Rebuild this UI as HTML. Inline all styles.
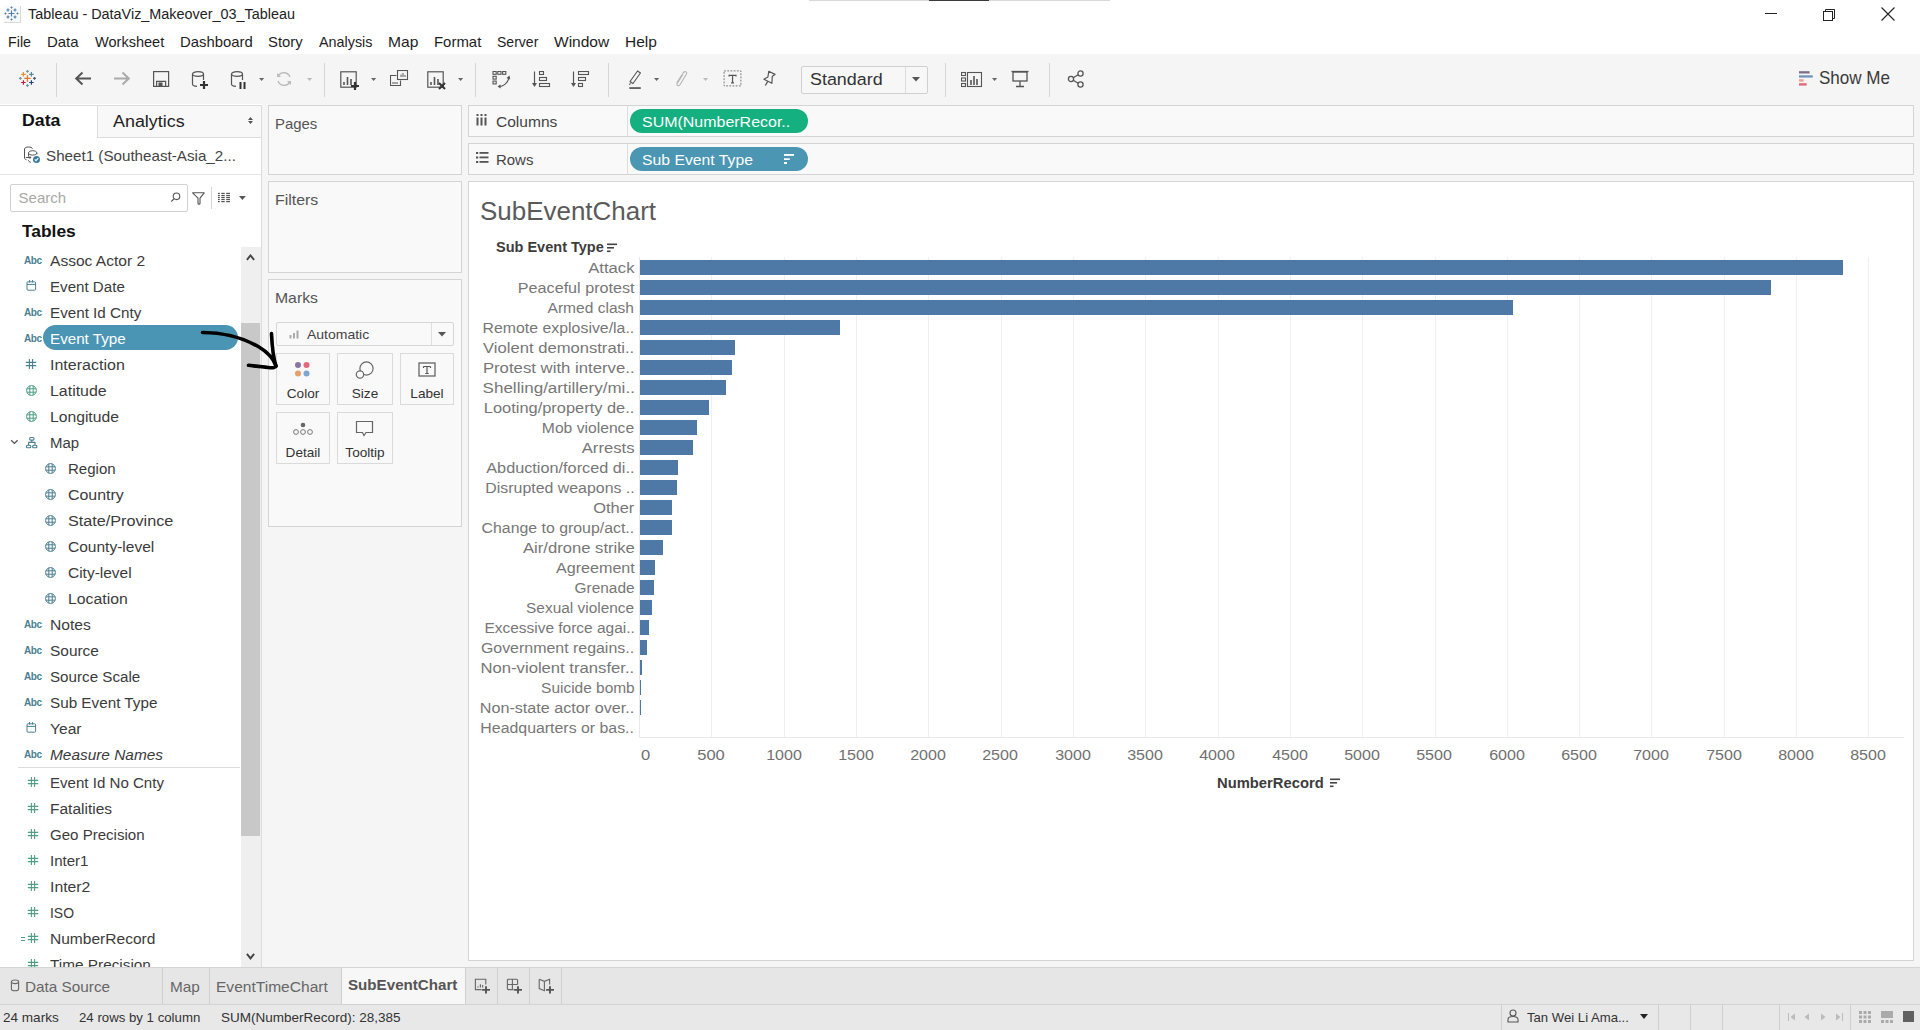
<!DOCTYPE html>
<html><head><meta charset="utf-8"><title>Tableau - DataViz_Makeover_03_Tableau</title>
<style>
html,body{margin:0;padding:0;width:1920px;height:1030px;overflow:hidden;background:#fff;}
body{position:relative;font-family:"Liberation Sans",sans-serif;}
.a{position:absolute;display:block;}
.t{white-space:nowrap;}
</style></head><body>
<div class="a" style="left:0px;top:0px;width:1920px;height:54px;background:#ffffff;"></div>
<div class="a" style="left:0px;top:54px;width:1920px;height:50px;background:#f5f5f5;"></div>
<div class="a" style="left:809px;top:0px;width:301px;height:1px;background:#d9d9d9;"></div>
<div class="a" style="left:929px;top:0px;width:60px;height:1px;background:#3a3a3a;"></div>
<svg class="a" style="left:3px;top:5px;" width="19" height="19" viewBox="0 0 19 19"><rect x="1" y="1" width="17" height="17" fill="#d8d8d8"/><rect x="0.5" y="0.5" width="16.5" height="16.5" fill="#f7f9fb"/><g stroke="#4f7fa8" stroke-width="1.2"><path d="M8.5 5.5v6M5.5 8.5h6"/><path d="M5 3.5v3M3.5 5h3M12 3.5v3M10.5 5h3M5 10.5v3M3.5 12h3M12 10.5v3M10.5 12h3"/><path d="M8.5 1.5v2M7.5 2.5h2M8.5 13.5v2M7.5 14.5h2M1.5 8.5h2M2.5 7.5v2M13.5 8.5h2M14.5 7.5v2" stroke-width="1"/></g></svg>
<div class="a t" id="f0" style="top:7.19px;font-size:14.9px;line-height:14.9px;color:#222;left:27.8px;transform-origin:0 50%;transform:scaleX(0.9666);">Tableau - DataViz_Makeover_03_Tableau</div>
<div class="a" style="left:1765px;top:13px;width:12px;height:1px;background:#222;"></div>
<svg class="a" style="left:1820px;top:6px;" width="18" height="18" viewBox="0 0 18 18"><g fill="none" stroke="#222" stroke-width="1"><rect x="3.5" y="5.5" width="9" height="9"/><path d="M5.5 5.5V3.5h9v9h-2"/></g></svg>
<svg class="a" style="left:1879px;top:5px;" width="18" height="18" viewBox="0 0 18 18"><path d="M2.5 2.5l13 13M15.5 2.5l-13 13" stroke="#222" stroke-width="1.1"/></svg>
<div class="a t" id="f1" style="top:35.14px;font-size:14.6px;line-height:14.6px;color:#1e1e1e;left:7.7px;transform-origin:0 50%;transform:scaleX(0.9781);">File</div>
<div class="a t" id="f2" style="top:35.14px;font-size:14.6px;line-height:14.6px;color:#1e1e1e;left:47.0px;transform-origin:0 50%;transform:scaleX(1.0250);">Data</div>
<div class="a t" id="f3" style="top:35.14px;font-size:14.6px;line-height:14.6px;color:#1e1e1e;left:94.8px;transform-origin:0 50%;transform:scaleX(0.9959);">Worksheet</div>
<div class="a t" id="f4" style="top:35.14px;font-size:14.6px;line-height:14.6px;color:#1e1e1e;left:179.79999999999998px;transform-origin:0 50%;transform:scaleX(1.0181);">Dashboard</div>
<div class="a t" id="f5" style="top:35.14px;font-size:14.6px;line-height:14.6px;color:#1e1e1e;left:268.4px;transform-origin:0 50%;transform:scaleX(1.0158);">Story</div>
<div class="a t" id="f6" style="top:35.14px;font-size:14.6px;line-height:14.6px;color:#1e1e1e;left:318.59999999999997px;transform-origin:0 50%;transform:scaleX(0.9845);">Analysis</div>
<div class="a t" id="f7" style="top:35.14px;font-size:14.6px;line-height:14.6px;color:#1e1e1e;left:387.59999999999997px;transform-origin:0 50%;transform:scaleX(1.0708);">Map</div>
<div class="a t" id="f8" style="top:35.14px;font-size:14.6px;line-height:14.6px;color:#1e1e1e;left:433.9px;transform-origin:0 50%;transform:scaleX(1.0234);">Format</div>
<div class="a t" id="f9" style="top:35.14px;font-size:14.6px;line-height:14.6px;color:#1e1e1e;left:496.7px;transform-origin:0 50%;transform:scaleX(0.9608);">Server</div>
<div class="a t" id="f10" style="top:35.14px;font-size:14.6px;line-height:14.6px;color:#1e1e1e;left:553.5px;transform-origin:0 50%;transform:scaleX(1.0635);">Window</div>
<div class="a t" id="f11" style="top:35.14px;font-size:14.6px;line-height:14.6px;color:#1e1e1e;left:624.8000000000001px;transform-origin:0 50%;transform:scaleX(1.0628);">Help</div>
<div class="a" style="left:56px;top:63px;width:1px;height:34px;background:#d6d6d6;"></div>
<div class="a" style="left:324px;top:63px;width:1px;height:34px;background:#d6d6d6;"></div>
<div class="a" style="left:475px;top:63px;width:1px;height:34px;background:#d6d6d6;"></div>
<div class="a" style="left:608px;top:63px;width:1px;height:34px;background:#d6d6d6;"></div>
<div class="a" style="left:945px;top:63px;width:1px;height:34px;background:#d6d6d6;"></div>
<div class="a" style="left:1049px;top:63px;width:1px;height:34px;background:#d6d6d6;"></div>
<svg class="a" style="left:18px;top:68px;" width="20" height="20" viewBox="0 0 20 20"><path d="M6.20 10.40h6.50M9.45 7.15v6.50" stroke="#e8762c" stroke-width="1.3"/><path d="M3.10 6.30h4.60M5.40 4.00v4.60" stroke="#eb912b" stroke-width="1.2"/><path d="M11.10 6.30h4.60M13.40 4.00v4.60" stroke="#5b879b" stroke-width="1.2"/><path d="M3.10 14.50h4.60M5.40 12.20v4.60" stroke="#c72035" stroke-width="1.2"/><path d="M11.10 14.50h4.60M13.40 12.20v4.60" stroke="#1f457e" stroke-width="1.2"/><path d="M8.05 3.30h2.80M9.45 1.90v2.80" stroke="#7199a6" stroke-width="1.2"/><path d="M8.05 17.50h2.80M9.45 16.10v2.80" stroke="#7199a6" stroke-width="1.2"/><path d="M1.00 10.40h2.80M2.40 9.00v2.80" stroke="#7099a6" stroke-width="1.2"/><path d="M15.10 10.40h2.80M16.50 9.00v2.80" stroke="#3f5d7e" stroke-width="1.2"/></svg>
<svg class="a" style="left:74px;top:71px;" width="18" height="16" viewBox="0 0 18 16"><path d="M17 7.5H2.5M8.5 1.5L2.2 7.5l6.3 6" fill="none" stroke="#555" stroke-width="2"/></svg>
<svg class="a" style="left:113px;top:71px;" width="18" height="16" viewBox="0 0 18 16"><path d="M1 7.5h14.5M9.5 1.5l6.3 6-6.3 6" fill="none" stroke="#aaa" stroke-width="2"/></svg>
<svg class="a" style="left:152px;top:70px;" width="18" height="18" viewBox="0 0 18 18"><g fill="none" stroke="#555" stroke-width="1.2"><rect x="1.6" y="1.6" width="15" height="14.8"/><path d="M4.6 16.4v-5h9v5"/></g><rect x="6.5" y="12.5" width="4" height="3.5" fill="#555"/></svg>
<svg class="a" style="left:191px;top:70px;" width="18" height="20" viewBox="0 0 18 20"><g fill="none" stroke="#555" stroke-width="1.2"><ellipse cx="7" cy="4" rx="5.5" ry="2.3"/><path d="M1.5 4v10c0 1.2 2 2.2 4.5 2.3M12.5 4v6"/></g><path d="M13 11v8M9 15h8" stroke="#333" stroke-width="2.2"/></svg>
<svg class="a" style="left:230px;top:70px;" width="18" height="20" viewBox="0 0 18 20"><g fill="none" stroke="#555" stroke-width="1.2"><ellipse cx="7" cy="4" rx="5.5" ry="2.3"/><path d="M1.5 4v10c0 1.2 2 2.2 4.5 2.3M12.5 4v6"/></g><path d="M10.5 12v7M14.5 12v7" stroke="#333" stroke-width="2"/></svg>
<svg class="a" style="left:259.2px;top:78px;" width="6" height="4" viewBox="0 0 6 4"><path d="M0 0h5.2L2.6 2.9z" fill="#666"/></svg>
<svg class="a" style="left:275px;top:70px;" width="18" height="18" viewBox="0 0 18 18"><g fill="none" stroke="#bbb" stroke-width="1.4"><path d="M15 7A6.5 6.5 0 0 0 3.5 5.5M3 11a6.5 6.5 0 0 0 11.5 1.5"/></g><path d="M2 3v4h4zM16 15v-4h-4z" fill="#bbb"/></svg>
<svg class="a" style="left:306.7px;top:78px;" width="6" height="4" viewBox="0 0 6 4"><path d="M0 0h5.2L2.6 2.9z" fill="#bbb"/></svg>
<svg class="a" style="left:340px;top:71px;" width="20" height="20" viewBox="0 0 20 20"><rect x="0.8" y="0.8" width="15.4" height="15.4" fill="none" stroke="#555" stroke-width="1.2"/><path d="M4 14v-3M7.5 14V6M11 14V8" stroke="#555" stroke-width="1.6"/><path d="M15 11v8M11 15h8" stroke="#333" stroke-width="2.2"/></svg>
<svg class="a" style="left:371.3px;top:78px;" width="6" height="4" viewBox="0 0 6 4"><path d="M0 0h5.2L2.6 2.9z" fill="#666"/></svg>
<svg class="a" style="left:390px;top:70px;" width="20" height="18" viewBox="0 0 20 18"><g fill="none" stroke="#555" stroke-width="1.1"><rect x="7.5" y="0.5" width="10" height="9"/><path d="M6.5 5.5H0.5v10h10v-5"/></g><path d="M11 7V4.5M13 7V3M15 7V5M3 14v-2M5 14v-2M7 14v-2" stroke="#555" stroke-width="1"/></svg>
<svg class="a" style="left:427px;top:71px;" width="20" height="20" viewBox="0 0 20 20"><rect x="0.8" y="0.8" width="15.4" height="15.4" fill="none" stroke="#555" stroke-width="1.2"/><path d="M4 14v-3M7.5 14V6M11 14V8" stroke="#555" stroke-width="1.6"/><path d="M12 12l6 6M18 12l-6 6" stroke="#333" stroke-width="2"/></svg>
<svg class="a" style="left:458px;top:78px;" width="6" height="4" viewBox="0 0 6 4"><path d="M0 0h5.2L2.6 2.9z" fill="#666"/></svg>
<svg class="a" style="left:492px;top:71px;" width="20" height="18" viewBox="0 0 20 18"><g fill="none" stroke="#555" stroke-width="1.1"><rect x="1" y="0.5" width="3.2" height="2.8"/><rect x="5.8" y="0.5" width="3.2" height="2.8"/><rect x="10.6" y="0.5" width="3.2" height="2.8"/><rect x="1" y="5.3" width="3.2" height="2.8"/><rect x="1" y="10.1" width="3.2" height="2.8"/><path d="M7 15.5c4 0 8.5-3 10-8.5"/></g><path d="M14.5 7l3-2.5 0.8 4zM5.5 15.5l3-2 0.2 4z" fill="#555"/></svg>
<svg class="a" style="left:532px;top:71px;" width="20" height="18" viewBox="0 0 20 18"><path d="M2.5 0.5v14" stroke="#555" stroke-width="1.2"/><path d="M0 12l2.5 4 2.5-4z" fill="#555"/><g fill="none" stroke="#555" stroke-width="1.1"><rect x="7.5" y="0.5" width="4" height="3"/><rect x="7.5" y="6.5" width="7" height="3"/><rect x="7.5" y="12.5" width="10" height="3"/></g></svg>
<svg class="a" style="left:571px;top:71px;" width="20" height="18" viewBox="0 0 20 18"><path d="M2.5 0.5v14" stroke="#555" stroke-width="1.2"/><path d="M0 12l2.5 4 2.5-4z" fill="#555"/><g fill="none" stroke="#555" stroke-width="1.1"><rect x="7.5" y="0.5" width="10" height="3"/><rect x="7.5" y="6.5" width="7" height="3"/><rect x="7.5" y="12.5" width="4" height="3"/></g></svg>
<svg class="a" style="left:628px;top:70px;" width="16" height="20" viewBox="0 0 16 20"><path d="M4.97 13.55L2.03 11.45 9.53 0.95 12.47 3.05z" fill="none" stroke="#555" stroke-width="1.1" stroke-linejoin="round"/><path d="M2.4 12.6L1.6 15" stroke="#555" stroke-width="1"/><rect x="1.3" y="17.2" width="11.5" height="1.7" fill="#555"/></svg>
<svg class="a" style="left:654.1px;top:78px;" width="6" height="4" viewBox="0 0 6 4"><path d="M0 0h5.2L2.6 2.9z" fill="#666"/></svg>
<svg class="a" style="left:674px;top:70px;" width="16" height="18" viewBox="0 0 16 18"><path d="M2.8 12.8L9.6 2.4C10.6 0.9 13.4 1.8 12.6 3.8L6 14.8C5 16.4 2.4 15.4 3 13.8L8.8 4.6" fill="none" stroke="#b5b5b5" stroke-width="1.1"/></svg>
<svg class="a" style="left:703.2px;top:78px;" width="6" height="4" viewBox="0 0 6 4"><path d="M0 0h5.2L2.6 2.9z" fill="#bbb"/></svg>
<svg class="a" style="left:723px;top:70px;" width="19" height="17" viewBox="0 0 19 17"><rect x="1.1" y="0.9" width="16.8" height="15" fill="none" stroke="#777" stroke-width="1" stroke-dasharray="1.8 1.4"/><path d="M6.1 5.3h6.9M6.1 4.8v1.6M13 4.8v1.6M9.55 5.3v7.5M8.1 12.8h2.9" stroke="#555" stroke-width="1.2" fill="none"/></svg>
<svg class="a" style="left:762px;top:70px;" width="15" height="17" viewBox="0 0 15 17"><path d="M6.8 1.3L13 4.4 10.3 6.2 9.9 13.3 1.9 9.3 5.9 7z" fill="none" stroke="#555" stroke-width="1.2" stroke-linejoin="round"/><path d="M5.8 11.4L3.3 15.5" stroke="#555" stroke-width="1.3"/></svg>
<div class="a" style="left:801px;top:66px;width:127px;height:28px;background:#f7f7f7;border:1px solid #d0d0d0;box-sizing:border-box;border-radius:2px;"></div>
<div class="a" style="left:905px;top:67px;width:1px;height:26px;background:#dcdcdc;"></div>
<div class="a t" id="f12" style="top:71.44px;font-size:17.2px;line-height:17.2px;color:#333;left:809.6px;transform-origin:0 50%;transform:scaleX(1.0406);">Standard</div>
<svg class="a" style="left:912px;top:77px;" width="9" height="5" viewBox="0 0 9 5"><path d="M0 0h8L4 4.5z" fill="#555"/></svg>
<svg class="a" style="left:961px;top:71px;" width="22" height="18" viewBox="0 0 22 18"><g fill="none" stroke="#555" stroke-width="1.1"><rect x="0.5" y="1.5" width="4" height="3"/><rect x="0.5" y="7" width="4" height="3"/><rect x="0.5" y="12.5" width="4" height="3"/><rect x="6.5" y="1.5" width="14" height="14"/></g><path d="M10 14V9M13 14V5M16 14V8" stroke="#555" stroke-width="1.6"/></svg>
<svg class="a" style="left:992.2px;top:78px;" width="6" height="4" viewBox="0 0 6 4"><path d="M0 0h5.2L2.6 2.9z" fill="#666"/></svg>
<svg class="a" style="left:1011px;top:70px;" width="20" height="18" viewBox="0 0 20 18"><g fill="none" stroke="#555" stroke-width="1.3"><path d="M0.5 1.5h17"/><rect x="2" y="2" width="14" height="9"/><path d="M9 11v5M5 16.5h8"/></g></svg>
<svg class="a" style="left:1067px;top:70px;" width="18" height="18" viewBox="0 0 18 18"><g fill="none" stroke="#555" stroke-width="1.3"><circle cx="4" cy="9" r="2.6"/><circle cx="13.5" cy="3.5" r="2.6"/><circle cx="13.5" cy="14.5" r="2.6"/><path d="M6.2 7.7l5-3M6.2 10.3l5 3"/></g></svg>
<svg class="a" style="left:1799px;top:71px;" width="17" height="16" viewBox="0 0 17 16"><rect x="0" y="0.2" width="10.6" height="2.3" fill="#7c6d8c"/><rect x="0" y="4.3" width="13.8" height="2.3" fill="#7393b9"/><rect x="0" y="8.2" width="4.6" height="2.4" fill="#eda58a"/><rect x="0" y="12.2" width="7.7" height="2.4" fill="#e36a7d"/></svg>
<div class="a t" id="f13" style="top:69.93px;font-size:17.8px;line-height:17.8px;color:#3a3a3a;left:1819.2px;transform-origin:0 50%;transform:scaleX(0.9578);">Show Me</div>
<div class="a" style="left:262px;top:104px;width:1658px;height:863px;background:#f5f5f5;"></div>
<div class="a" style="left:268px;top:105px;width:194px;height:70px;background:#f9f9f9;border:1px solid #d4d4d4;box-sizing:border-box;"></div>
<div class="a t" id="f14" style="top:116.30px;font-size:15.0px;line-height:15.0px;color:#555;left:275.4px;transform-origin:0 50%;transform:scaleX(0.9942);">Pages</div>
<div class="a" style="left:268px;top:181px;width:194px;height:92px;background:#f9f9f9;border:1px solid #d4d4d4;box-sizing:border-box;"></div>
<div class="a t" id="f15" style="top:192.40px;font-size:15.0px;line-height:15.0px;color:#555;left:275.4px;transform-origin:0 50%;transform:scaleX(1.0601);">Filters</div>
<div class="a" style="left:268px;top:279px;width:194px;height:248px;background:#f9f9f9;border:1px solid #d4d4d4;box-sizing:border-box;"></div>
<div class="a t" id="f16" style="top:289.80px;font-size:15.0px;line-height:15.0px;color:#555;left:275.4px;transform-origin:0 50%;transform:scaleX(1.0503);">Marks</div>
<div class="a" style="left:276px;top:322px;width:178px;height:24px;background:#f9f9f9;border:1px solid #d6d6d6;box-sizing:border-box;border-radius:2px;"></div>
<div class="a" style="left:431px;top:323px;width:1px;height:22px;background:#dedede;"></div>
<svg class="a" style="left:289px;top:329px;" width="12" height="10" viewBox="0 0 12 10"><path d="M1.5 9.5V6M5 9.5V4M8.5 9.5V1.5" stroke="#aaa" stroke-width="2"/></svg>
<div class="a t" id="f17" style="top:327.79px;font-size:13.6px;line-height:13.6px;color:#444;left:307px;transform-origin:0 50%;transform:scaleX(1.0289);">Automatic</div>
<svg class="a" style="left:438px;top:332px;" width="9" height="5" viewBox="0 0 9 5"><path d="M0 0h8L4 4.5z" fill="#555"/></svg>
<div class="a" style="left:276px;top:353px;width:54px;height:52px;background:#f9f9f9;border:1px solid #dadada;box-sizing:border-box;"></div>
<div class="a t" style="top:387.09px;font-size:13.6px;line-height:13.6px;color:#333;left:303.0px;transform:translateX(-50%);">Color</div>
<div class="a" style="left:337px;top:353px;width:56px;height:52px;background:#f9f9f9;border:1px solid #dadada;box-sizing:border-box;"></div>
<div class="a t" style="top:387.09px;font-size:13.6px;line-height:13.6px;color:#333;left:365.0px;transform:translateX(-50%);">Size</div>
<div class="a" style="left:400px;top:353px;width:54px;height:52px;background:#f9f9f9;border:1px solid #dadada;box-sizing:border-box;"></div>
<div class="a t" style="top:387.09px;font-size:13.6px;line-height:13.6px;color:#333;left:427.0px;transform:translateX(-50%);">Label</div>
<div class="a" style="left:276px;top:412px;width:54px;height:52px;background:#f9f9f9;border:1px solid #dadada;box-sizing:border-box;"></div>
<div class="a t" style="top:446.09px;font-size:13.6px;line-height:13.6px;color:#333;left:303.0px;transform:translateX(-50%);">Detail</div>
<div class="a" style="left:337px;top:412px;width:56px;height:52px;background:#f9f9f9;border:1px solid #dadada;box-sizing:border-box;"></div>
<div class="a t" style="top:446.09px;font-size:13.6px;line-height:13.6px;color:#333;left:365.0px;transform:translateX(-50%);">Tooltip</div>
<svg class="a" style="left:293px;top:360px;" width="20" height="20" viewBox="0 0 20 20"><circle cx="5" cy="5" r="3" fill="#8a76a5"/><circle cx="13.5" cy="5" r="3" fill="#e5697c"/><circle cx="5" cy="13.5" r="3" fill="#e8a06f"/><circle cx="13.5" cy="13.5" r="3" fill="#7fa6cf"/></svg>
<svg class="a" style="left:355px;top:361px;" width="20" height="20" viewBox="0 0 20 20"><g fill="none" stroke="#666" stroke-width="1.2"><circle cx="11.5" cy="7.5" r="6.6"/><circle cx="5" cy="13.5" r="3.7" fill="#f9f9f9"/></g></svg>
<svg class="a" style="left:418px;top:362px;" width="20" height="17" viewBox="0 0 20 17"><rect x="1" y="1" width="16" height="13" fill="none" stroke="#666" stroke-width="1.3"/><path d="M5.5 4.5h7M9 4.5v7M7.3 11.5h3.4M5.5 4.5v1.6M12.5 4.5v1.6" stroke="#555" stroke-width="1.2" fill="none"/></svg>
<svg class="a" style="left:292px;top:422px;" width="22" height="14" viewBox="0 0 22 14"><circle cx="11" cy="3" r="2.3" fill="#666"/><g fill="none" stroke="#777" stroke-width="1"><circle cx="4" cy="10" r="2.4"/><circle cx="11" cy="10" r="2.4"/><circle cx="18" cy="10" r="2.4"/></g></svg>
<svg class="a" style="left:355px;top:420px;" width="20" height="18" viewBox="0 0 20 18"><path d="M1.5 1.5h16v11h-6.5l-2 3-1.5-3H1.5z" fill="none" stroke="#666" stroke-width="1.2"/></svg>
<div class="a" style="left:468px;top:105px;width:1446px;height:32px;background:#f9f9f9;border:1px solid #d4d4d4;box-sizing:border-box;"></div>
<div class="a" style="left:627px;top:106px;width:1px;height:30px;background:#dddddd;"></div>
<div class="a" style="left:468px;top:143px;width:1446px;height:32px;background:#f9f9f9;border:1px solid #d4d4d4;box-sizing:border-box;"></div>
<div class="a" style="left:627px;top:144px;width:1px;height:30px;background:#dddddd;"></div>
<svg class="a" style="left:476px;top:114px;" width="12" height="13" viewBox="0 0 12 13"><g fill="#555"><rect x="0.5" y="0" width="2" height="2"/><rect x="4.5" y="0" width="2" height="2"/><rect x="8.5" y="0" width="2" height="2"/><rect x="0.5" y="3.5" width="2" height="8"/><rect x="4.5" y="3.5" width="2" height="8"/><rect x="8.5" y="3.5" width="2" height="8"/></g></svg>
<div class="a t" id="f18" style="top:114.33px;font-size:15.2px;line-height:15.2px;color:#444;left:495.8px;transform-origin:0 50%;transform:scaleX(1.0227);">Columns</div>
<svg class="a" style="left:476px;top:152px;" width="13" height="12" viewBox="0 0 13 12"><g fill="#555"><rect x="0" y="0" width="2.2" height="2"/><rect x="0" y="4.5" width="2.2" height="2"/><rect x="0" y="9" width="2.2" height="2"/><rect x="3.5" y="0" width="9" height="1.8"/><rect x="3.5" y="4.5" width="9" height="1.8"/><rect x="3.5" y="9" width="9" height="1.8"/></g></svg>
<div class="a t" id="f19" style="top:152.33px;font-size:15.2px;line-height:15.2px;color:#444;left:495.8px;transform-origin:0 50%;transform:scaleX(0.9846);">Rows</div>
<div class="a" style="left:630px;top:109px;width:178px;height:24px;background:#14b07f;border-radius:12px;"></div>
<div class="a t" id="f20" style="top:114.08px;font-size:15.5px;line-height:15.5px;color:#ffffff;left:642.4px;transform-origin:0 50%;transform:scaleX(1.0303);">SUM(NumberRecor..</div>
<div class="a" style="left:630px;top:147px;width:178px;height:24px;background:#4a96b3;border-radius:12px;"></div>
<div class="a t" id="f21" style="top:152.08px;font-size:15.5px;line-height:15.5px;color:#ffffff;left:642.4px;transform-origin:0 50%;transform:scaleX(1.0160);">Sub Event Type</div>
<svg class="a" style="left:784px;top:153px;" width="12" height="12" viewBox="0 0 12 12"><g fill="#fff"><rect x="0" y="1" width="10" height="1.9"/><rect x="0" y="5.3" width="5.8" height="1.7"/><rect x="0" y="9" width="3" height="2"/></g></svg>
<div class="a" style="left:0px;top:104px;width:262px;height:863px;background:#ffffff;"></div>
<div class="a" style="left:261px;top:105px;width:1px;height:862px;background:#dcdcdc;"></div>
<div class="a" style="left:0px;top:105px;width:262px;height:1px;background:#dcdcdc;"></div>
<div class="a" style="left:98px;top:106px;width:163px;height:31px;background:#f8f8f8;"></div>
<div class="a" style="left:97px;top:106px;width:1px;height:32px;background:#dcdcdc;"></div>
<div class="a" style="left:98px;top:137px;width:163px;height:1px;background:#dcdcdc;"></div>
<div class="a t" id="f22" style="top:112.37px;font-size:17.4px;line-height:17.4px;color:#111;font-weight:bold;left:21.8px;transform-origin:0 50%;transform:scaleX(1.0185);">Data</div>
<div class="a t" id="f23" style="top:113.06px;font-size:17.3px;line-height:17.3px;color:#222;left:112.8px;transform-origin:0 50%;transform:scaleX(1.0353);">Analytics</div>
<svg class="a" style="left:247px;top:116px;" width="7" height="9" viewBox="0 0 7 9"><path d="M1 4L3.5 1 6 4zM1 5l2.5 3L6 5z" fill="#555"/></svg>
<svg class="a" style="left:23px;top:146px;" width="18" height="18" viewBox="0 0 18 18"><g fill="none" stroke="#555" stroke-width="1"><path d="M9.5 2.6C9 1.6 7.5 1 5.5 1S1.5 1.7 1.5 3v9.2c0 0.7 0.8 1.3 2 1.6"/><path d="M5.5 7c0-1.3 1.8-2.3 4.2-2.3s4.2 1 4.2 2.3c0 1.2-1.8 2.1-4.2 2.1S5.5 8.2 5.5 7zM5.5 7v3.5M5.5 14v0.5c0 0.8 1 1.5 2.3 1.8M13.9 7v1.3"/><path d="M2.8 11.5H7"/></g><path d="M6.5 9.8l2 1.7-2 1.7z" fill="#555"/><circle cx="13.5" cy="13.4" r="3.5" fill="#3b7c9e"/><path d="M11.8 13.4l1.2 1.2 2.3-2.4" stroke="#fff" stroke-width="1.1" fill="none"/></svg>
<div class="a t" id="f24" style="top:148.20px;font-size:15.0px;line-height:15.0px;color:#444;left:45.5px;transform-origin:0 50%;transform:scaleX(1.0121);">Sheet1 (Southeast-Asia_2...</div>
<div class="a" style="left:0px;top:174px;width:261px;height:1px;background:#e3e3e3;"></div>
<div class="a" style="left:10px;top:184px;width:178px;height:28px;background:#ffffff;border:1px solid #d2d2d2;box-sizing:border-box;border-radius:2px;"></div>
<div class="a t" style="top:190.30px;font-size:15.0px;line-height:15.0px;color:#a8a8a8;left:18.6px;">Search</div>
<svg class="a" style="left:168px;top:190px;" width="14" height="14" viewBox="0 0 14 14"><g fill="none" stroke="#555" stroke-width="1.1"><circle cx="8.5" cy="6.3" r="3.3"/><path d="M6.2 8.6L3.3 11.5"/></g></svg>
<svg class="a" style="left:191px;top:191px;" width="15" height="14" viewBox="0 0 15 14"><path d="M1.6 1.8h11.6L9 7.2v5.2c0 0.5-0.4 0.7-0.9 0.7h-0.2c-0.5 0-0.9-0.2-0.9-0.7V7.2z" fill="none" stroke="#555" stroke-width="1.1" stroke-linejoin="round"/></svg>
<div class="a" style="left:211px;top:187px;width:1px;height:22px;background:#d6d6d6;"></div>
<svg class="a" style="left:218px;top:192px;" width="13" height="11" viewBox="0 0 13 11"><g fill="#555"><rect x="0" y="0.8" width="1.8" height="1.2"/><rect x="3.3" y="0.8" width="3.4" height="1.2"/><rect x="8.2" y="0.8" width="3.8" height="1.2"/><rect x="0" y="2.9" width="1.8" height="1.2"/><rect x="3.3" y="2.9" width="3.4" height="1.2"/><rect x="8.2" y="2.9" width="3.8" height="1.2"/><rect x="0" y="4.9" width="1.8" height="1.2"/><rect x="3.3" y="4.9" width="3.4" height="1.2"/><rect x="8.2" y="4.9" width="3.8" height="1.2"/><rect x="0" y="6.9" width="1.8" height="1.2"/><rect x="3.3" y="6.9" width="3.4" height="1.2"/><rect x="8.2" y="6.9" width="3.8" height="1.2"/><rect x="0" y="9" width="1.8" height="1.2"/><rect x="3.3" y="9" width="3.4" height="1.2"/><rect x="8.2" y="9" width="3.8" height="1.2"/></g></svg>
<svg class="a" style="left:239px;top:196px;" width="7" height="4" viewBox="0 0 7 4"><path d="M0 0h6.8L3.4 4z" fill="#555"/></svg>
<div class="a t" id="f25" style="top:222.67px;font-size:17.4px;line-height:17.4px;color:#111;font-weight:bold;left:21.8px;transform-origin:0 50%;transform:scaleX(0.9998);">Tables</div>
<div class="a" style="left:241px;top:247px;width:20px;height:720px;background:#efefef;"></div>
<div class="a" style="left:241px;top:323px;width:19px;height:513px;background:#c8c8c8;"></div>
<svg class="a" style="left:245px;top:251px;" width="12" height="12" viewBox="0 0 12 12"><path d="M1.9 8.9L5.5 4.4 9.1 8.9" fill="none" stroke="#444" stroke-width="1.9"/></svg>
<svg class="a" style="left:245px;top:951px;" width="12" height="10" viewBox="0 0 12 10"><path d="M1.9 2.9L5.5 7.4 9.1 2.9" fill="none" stroke="#444" stroke-width="1.9"/></svg>
<div class="a t" style="top:256.34px;font-size:10px;line-height:10px;color:#4a7f92;font-weight:bold;left:24px;letter-spacing:-0.4px;">Abc</div>
<div class="a t" id="f26" style="top:252.63px;font-size:15.2px;line-height:15.2px;color:#3b3b3b;left:50px;transform-origin:0 50%;transform:scaleX(1.0252);">Assoc Actor 2</div>
<svg class="a" style="left:26px;top:280px;" width="12" height="12" viewBox="0 0 12 12"><g fill="none" stroke="#4a7f92" stroke-width="1"><rect x="1" y="1.8" width="8.6" height="8.4" rx="1"/><path d="M1 4.4h8.6M3.6 0v2.5M6.6 0v2.5"/></g></svg>
<div class="a t" id="f27" style="top:278.63px;font-size:15.2px;line-height:15.2px;color:#3b3b3b;left:50px;transform-origin:0 50%;transform:scaleX(0.9955);">Event Date</div>
<div class="a t" style="top:308.34px;font-size:10px;line-height:10px;color:#4a7f92;font-weight:bold;left:24px;letter-spacing:-0.4px;">Abc</div>
<div class="a t" id="f28" style="top:304.63px;font-size:15.2px;line-height:15.2px;color:#3b3b3b;left:50px;transform-origin:0 50%;transform:scaleX(1.0014);">Event Id Cnty</div>
<div class="a" style="left:43px;top:325px;width:195px;height:25px;background:#4a95b3;border-radius:0 12.5px 12.5px 0;border-top-left-radius:12.5px;border-bottom-left-radius:12.5px;"></div>
<div class="a t" style="top:334.34px;font-size:10px;line-height:10px;color:#4a7f92;font-weight:bold;left:24px;letter-spacing:-0.4px;">Abc</div>
<div class="a t" id="f29" style="top:330.63px;font-size:15.2px;line-height:15.2px;color:#ffffff;left:50px;transform-origin:0 50%;transform:scaleX(0.9998);">Event Type</div>
<svg class="a" style="left:25px;top:358px;" width="12" height="12" viewBox="0 0 12 12"><path d="M4.4 1v10M7.6 1v10M0.8 4.4h10.4M0.8 7.6h10.4" stroke="#4a7f92" stroke-width="1.1" fill="none"/></svg>
<div class="a t" id="f30" style="top:356.63px;font-size:15.2px;line-height:15.2px;color:#3b3b3b;left:50px;transform-origin:0 50%;transform:scaleX(1.0547);">Interaction</div>
<svg class="a" style="left:25.5px;top:385px;" width="12" height="12" viewBox="0 0 12 12"><g fill="none" stroke="#4e9e85" stroke-width="1"><circle cx="5.5" cy="5.5" r="4.9"/><path d="M3.8 0.8v9.4M7.2 0.8v9.4M0.8 3.8h9.4M0.8 7.2h9.4"/></g></svg>
<div class="a t" id="f31" style="top:382.63px;font-size:15.2px;line-height:15.2px;color:#3b3b3b;left:50px;transform-origin:0 50%;transform:scaleX(1.0491);">Latitude</div>
<svg class="a" style="left:25.5px;top:411px;" width="12" height="12" viewBox="0 0 12 12"><g fill="none" stroke="#4e9e85" stroke-width="1"><circle cx="5.5" cy="5.5" r="4.9"/><path d="M3.8 0.8v9.4M7.2 0.8v9.4M0.8 3.8h9.4M0.8 7.2h9.4"/></g></svg>
<div class="a t" id="f32" style="top:408.63px;font-size:15.2px;line-height:15.2px;color:#3b3b3b;left:50px;transform-origin:0 50%;transform:scaleX(1.0325);">Longitude</div>
<svg class="a" style="left:24px;top:436px;" width="16" height="14" viewBox="0 0 16 14"><g fill="none" stroke="#4a7f92" stroke-width="1.1"><rect x="5.6" y="1.5" width="4.4" height="2.6" rx="1"/><path d="M7.8 4.1V6.4M4.6 9.2V6.4h6.4v2.8"/><rect x="2.5" y="9.2" width="4.3" height="2.6" rx="1"/><rect x="8.6" y="9.2" width="4.3" height="2.6" rx="1"/></g></svg>
<svg class="a" style="left:10px;top:439px;" width="10" height="8" viewBox="0 0 10 8"><path d="M1.2 1.2L4.4 4.4 7.6 1.2" fill="none" stroke="#555" stroke-width="1.3"/></svg>
<div class="a t" id="f33" style="top:434.63px;font-size:15.2px;line-height:15.2px;color:#3b3b3b;left:50px;transform-origin:0 50%;transform:scaleX(0.9849);">Map</div>
<svg class="a" style="left:44.5px;top:463px;" width="12" height="12" viewBox="0 0 12 12"><g fill="none" stroke="#4a7f92" stroke-width="1"><circle cx="5.5" cy="5.5" r="4.9"/><path d="M3.8 0.8v9.4M7.2 0.8v9.4M0.8 3.8h9.4M0.8 7.2h9.4"/></g></svg>
<div class="a t" id="f34" style="top:460.63px;font-size:15.2px;line-height:15.2px;color:#3b3b3b;left:68px;transform-origin:0 50%;transform:scaleX(0.9888);">Region</div>
<svg class="a" style="left:44.5px;top:489px;" width="12" height="12" viewBox="0 0 12 12"><g fill="none" stroke="#4a7f92" stroke-width="1"><circle cx="5.5" cy="5.5" r="4.9"/><path d="M3.8 0.8v9.4M7.2 0.8v9.4M0.8 3.8h9.4M0.8 7.2h9.4"/></g></svg>
<div class="a t" id="f35" style="top:486.63px;font-size:15.2px;line-height:15.2px;color:#3b3b3b;left:68px;transform-origin:0 50%;transform:scaleX(1.0491);">Country</div>
<svg class="a" style="left:44.5px;top:515px;" width="12" height="12" viewBox="0 0 12 12"><g fill="none" stroke="#4a7f92" stroke-width="1"><circle cx="5.5" cy="5.5" r="4.9"/><path d="M3.8 0.8v9.4M7.2 0.8v9.4M0.8 3.8h9.4M0.8 7.2h9.4"/></g></svg>
<div class="a t" id="f36" style="top:512.63px;font-size:15.2px;line-height:15.2px;color:#3b3b3b;left:68px;transform-origin:0 50%;transform:scaleX(1.0660);">State/Province</div>
<svg class="a" style="left:44.5px;top:541px;" width="12" height="12" viewBox="0 0 12 12"><g fill="none" stroke="#4a7f92" stroke-width="1"><circle cx="5.5" cy="5.5" r="4.9"/><path d="M3.8 0.8v9.4M7.2 0.8v9.4M0.8 3.8h9.4M0.8 7.2h9.4"/></g></svg>
<div class="a t" id="f37" style="top:538.63px;font-size:15.2px;line-height:15.2px;color:#3b3b3b;left:68px;transform-origin:0 50%;transform:scaleX(1.0222);">County-level</div>
<svg class="a" style="left:44.5px;top:567px;" width="12" height="12" viewBox="0 0 12 12"><g fill="none" stroke="#4a7f92" stroke-width="1"><circle cx="5.5" cy="5.5" r="4.9"/><path d="M3.8 0.8v9.4M7.2 0.8v9.4M0.8 3.8h9.4M0.8 7.2h9.4"/></g></svg>
<div class="a t" id="f38" style="top:564.63px;font-size:15.2px;line-height:15.2px;color:#3b3b3b;left:68px;transform-origin:0 50%;transform:scaleX(1.0184);">City-level</div>
<svg class="a" style="left:44.5px;top:593px;" width="12" height="12" viewBox="0 0 12 12"><g fill="none" stroke="#4a7f92" stroke-width="1"><circle cx="5.5" cy="5.5" r="4.9"/><path d="M3.8 0.8v9.4M7.2 0.8v9.4M0.8 3.8h9.4M0.8 7.2h9.4"/></g></svg>
<div class="a t" id="f39" style="top:590.63px;font-size:15.2px;line-height:15.2px;color:#3b3b3b;left:68px;transform-origin:0 50%;transform:scaleX(1.0397);">Location</div>
<div class="a t" style="top:620.33px;font-size:10px;line-height:10px;color:#4a7f92;font-weight:bold;left:24px;letter-spacing:-0.4px;">Abc</div>
<div class="a t" id="f40" style="top:616.63px;font-size:15.2px;line-height:15.2px;color:#3b3b3b;left:50px;transform-origin:0 50%;transform:scaleX(1.0280);">Notes</div>
<div class="a t" style="top:646.33px;font-size:10px;line-height:10px;color:#4a7f92;font-weight:bold;left:24px;letter-spacing:-0.4px;">Abc</div>
<div class="a t" id="f41" style="top:642.63px;font-size:15.2px;line-height:15.2px;color:#3b3b3b;left:50px;transform-origin:0 50%;transform:scaleX(1.0161);">Source</div>
<div class="a t" style="top:672.33px;font-size:10px;line-height:10px;color:#4a7f92;font-weight:bold;left:24px;letter-spacing:-0.4px;">Abc</div>
<div class="a t" id="f42" style="top:668.63px;font-size:15.2px;line-height:15.2px;color:#3b3b3b;left:50px;transform-origin:0 50%;transform:scaleX(0.9995);">Source Scale</div>
<div class="a t" style="top:698.33px;font-size:10px;line-height:10px;color:#4a7f92;font-weight:bold;left:24px;letter-spacing:-0.4px;">Abc</div>
<div class="a t" id="f43" style="top:694.63px;font-size:15.2px;line-height:15.2px;color:#3b3b3b;left:50px;transform-origin:0 50%;transform:scaleX(1.0042);">Sub Event Type</div>
<svg class="a" style="left:26px;top:722px;" width="12" height="12" viewBox="0 0 12 12"><g fill="none" stroke="#4a7f92" stroke-width="1"><rect x="1" y="1.8" width="8.6" height="8.4" rx="1"/><path d="M1 4.4h8.6M3.6 0v2.5M6.6 0v2.5"/></g></svg>
<div class="a t" id="f44" style="top:720.63px;font-size:15.2px;line-height:15.2px;color:#3b3b3b;left:50px;transform-origin:0 50%;transform:scaleX(1.0265);">Year</div>
<div class="a t" style="top:750.33px;font-size:10px;line-height:10px;color:#4a7f92;font-weight:bold;left:24px;letter-spacing:-0.4px;">Abc</div>
<div class="a t" id="f45" style="top:746.63px;font-size:15.2px;line-height:15.2px;color:#3b3b3b;left:50px;transform-origin:0 50%;transform:scaleX(1.0142);"><i>Measure Names</i></div>
<div class="a" style="left:18px;top:767px;width:222px;height:1px;background:#dddddd;"></div>
<svg class="a" style="left:27px;top:776px;" width="12" height="12" viewBox="0 0 12 12"><path d="M4.4 1v10M7.6 1v10M0.8 4.4h10.4M0.8 7.6h10.4" stroke="#4e9e85" stroke-width="1.1" fill="none"/></svg>
<div class="a t" id="f46" style="top:774.63px;font-size:15.2px;line-height:15.2px;color:#3b3b3b;left:50px;transform-origin:0 50%;transform:scaleX(0.9929);">Event Id No Cnty</div>
<svg class="a" style="left:27px;top:802px;" width="12" height="12" viewBox="0 0 12 12"><path d="M4.4 1v10M7.6 1v10M0.8 4.4h10.4M0.8 7.6h10.4" stroke="#4e9e85" stroke-width="1.1" fill="none"/></svg>
<div class="a t" id="f47" style="top:800.63px;font-size:15.2px;line-height:15.2px;color:#3b3b3b;left:50px;transform-origin:0 50%;transform:scaleX(1.0217);">Fatalities</div>
<svg class="a" style="left:27px;top:828px;" width="12" height="12" viewBox="0 0 12 12"><path d="M4.4 1v10M7.6 1v10M0.8 4.4h10.4M0.8 7.6h10.4" stroke="#4e9e85" stroke-width="1.1" fill="none"/></svg>
<div class="a t" id="f48" style="top:826.63px;font-size:15.2px;line-height:15.2px;color:#3b3b3b;left:50px;transform-origin:0 50%;transform:scaleX(0.9917);">Geo Precision</div>
<svg class="a" style="left:27px;top:854px;" width="12" height="12" viewBox="0 0 12 12"><path d="M4.4 1v10M7.6 1v10M0.8 4.4h10.4M0.8 7.6h10.4" stroke="#4e9e85" stroke-width="1.1" fill="none"/></svg>
<div class="a t" id="f49" style="top:852.63px;font-size:15.2px;line-height:15.2px;color:#3b3b3b;left:50px;transform-origin:0 50%;transform:scaleX(0.9912);">Inter1</div>
<svg class="a" style="left:27px;top:880px;" width="12" height="12" viewBox="0 0 12 12"><path d="M4.4 1v10M7.6 1v10M0.8 4.4h10.4M0.8 7.6h10.4" stroke="#4e9e85" stroke-width="1.1" fill="none"/></svg>
<div class="a t" id="f50" style="top:878.63px;font-size:15.2px;line-height:15.2px;color:#3b3b3b;left:50px;transform-origin:0 50%;transform:scaleX(1.0401);">Inter2</div>
<svg class="a" style="left:27px;top:906px;" width="12" height="12" viewBox="0 0 12 12"><path d="M4.4 1v10M7.6 1v10M0.8 4.4h10.4M0.8 7.6h10.4" stroke="#4e9e85" stroke-width="1.1" fill="none"/></svg>
<div class="a t" id="f51" style="top:904.63px;font-size:15.2px;line-height:15.2px;color:#3b3b3b;left:50px;transform-origin:0 50%;transform:scaleX(0.9170);">ISO</div>
<svg class="a" style="left:27px;top:932px;" width="12" height="12" viewBox="0 0 12 12"><path d="M4.4 1v10M7.6 1v10M0.8 4.4h10.4M0.8 7.6h10.4" stroke="#4e9e85" stroke-width="1.1" fill="none"/></svg>
<div class="a" style="left:21px;top:937px;width:4px;height:1.2px;background:#4e9e85;"></div>
<div class="a" style="left:21px;top:939.5px;width:4px;height:1.2px;background:#4e9e85;"></div>
<div class="a t" id="f52" style="top:930.63px;font-size:15.2px;line-height:15.2px;color:#3b3b3b;left:50px;transform-origin:0 50%;transform:scaleX(1.0235);">NumberRecord</div>
<svg class="a" style="left:27px;top:958px;" width="12" height="12" viewBox="0 0 12 12"><path d="M4.4 1v10M7.6 1v10M0.8 4.4h10.4M0.8 7.6h10.4" stroke="#4e9e85" stroke-width="1.1" fill="none"/></svg>
<div class="a t" id="f53" style="top:956.63px;font-size:15.2px;line-height:15.2px;color:#3b3b3b;left:50px;transform-origin:0 50%;transform:scaleX(1.0103);">Time Precision</div>
<div class="a" style="left:468px;top:181px;width:1446px;height:780px;background:#ffffff;border:1px solid #d4d4d4;box-sizing:border-box;"></div>
<div class="a t" id="f54" style="top:198.70px;font-size:25.4px;line-height:25.4px;color:#5a5a5a;left:479.8px;transform-origin:0 50%;transform:scaleX(1.0220);">SubEventChart</div>
<div class="a t" id="f55" style="top:239.71px;font-size:14.4px;line-height:14.4px;color:#3c3c3c;font-weight:bold;left:495.7px;transform-origin:0 50%;transform:scaleX(1.0085);">Sub Event Type</div>
<svg class="a" style="left:607px;top:243px;" width="12" height="10" viewBox="0 0 12 10"><g fill="#444"><rect x="0" y="0.5" width="10" height="1.6"/><rect x="0" y="4" width="7" height="1.6"/><rect x="0" y="7.5" width="3.5" height="1.6"/></g></svg>
<div class="a" style="left:639px;top:257px;width:1px;height:481px;background:#e8e8e8;"></div>
<div class="a" style="left:711px;top:257px;width:1px;height:481px;background:#f0f0f0;"></div>
<div class="a" style="left:784px;top:257px;width:1px;height:481px;background:#f0f0f0;"></div>
<div class="a" style="left:856px;top:257px;width:1px;height:481px;background:#f0f0f0;"></div>
<div class="a" style="left:928px;top:257px;width:1px;height:481px;background:#f0f0f0;"></div>
<div class="a" style="left:1001px;top:257px;width:1px;height:481px;background:#f0f0f0;"></div>
<div class="a" style="left:1073px;top:257px;width:1px;height:481px;background:#f0f0f0;"></div>
<div class="a" style="left:1145px;top:257px;width:1px;height:481px;background:#f0f0f0;"></div>
<div class="a" style="left:1218px;top:257px;width:1px;height:481px;background:#f0f0f0;"></div>
<div class="a" style="left:1290px;top:257px;width:1px;height:481px;background:#f0f0f0;"></div>
<div class="a" style="left:1362px;top:257px;width:1px;height:481px;background:#f0f0f0;"></div>
<div class="a" style="left:1435px;top:257px;width:1px;height:481px;background:#f0f0f0;"></div>
<div class="a" style="left:1507px;top:257px;width:1px;height:481px;background:#f0f0f0;"></div>
<div class="a" style="left:1579px;top:257px;width:1px;height:481px;background:#f0f0f0;"></div>
<div class="a" style="left:1651px;top:257px;width:1px;height:481px;background:#f0f0f0;"></div>
<div class="a" style="left:1724px;top:257px;width:1px;height:481px;background:#f0f0f0;"></div>
<div class="a" style="left:1796px;top:257px;width:1px;height:481px;background:#f0f0f0;"></div>
<div class="a" style="left:1868px;top:257px;width:1px;height:481px;background:#f0f0f0;"></div>
<div class="a" style="left:639px;top:737px;width:1265px;height:1px;background:#eaeaea;"></div>
<div class="a" style="left:640px;top:260px;width:1203px;height:15px;background:#4e79a7;"></div>
<div class="a t" id="f56" style="top:260.25px;font-size:15.3px;line-height:15.3px;color:#777777;right:1285.6px;transform-origin:100% 50%;transform:scaleX(1.0890);">Attack</div>
<div class="a" style="left:640px;top:280px;width:1131px;height:15px;background:#4e79a7;"></div>
<div class="a t" id="f57" style="top:280.25px;font-size:15.3px;line-height:15.3px;color:#777777;right:1285.6px;transform-origin:100% 50%;transform:scaleX(1.0557);">Peaceful protest</div>
<div class="a" style="left:640px;top:300px;width:873px;height:15px;background:#4e79a7;"></div>
<div class="a t" id="f58" style="top:300.25px;font-size:15.3px;line-height:15.3px;color:#777777;right:1285.6px;transform-origin:100% 50%;transform:scaleX(1.0175);">Armed clash</div>
<div class="a" style="left:640px;top:320px;width:200px;height:15px;background:#4e79a7;"></div>
<div class="a t" id="f59" style="top:320.25px;font-size:15.3px;line-height:15.3px;color:#777777;right:1285.6px;transform-origin:100% 50%;transform:scaleX(1.0373);">Remote explosive/la..</div>
<div class="a" style="left:640px;top:340px;width:95px;height:15px;background:#4e79a7;"></div>
<div class="a t" id="f60" style="top:340.25px;font-size:15.3px;line-height:15.3px;color:#777777;right:1285.6px;transform-origin:100% 50%;transform:scaleX(1.0857);">Violent demonstrati..</div>
<div class="a" style="left:640px;top:360px;width:92px;height:15px;background:#4e79a7;"></div>
<div class="a t" id="f61" style="top:360.25px;font-size:15.3px;line-height:15.3px;color:#777777;right:1285.6px;transform-origin:100% 50%;transform:scaleX(1.0947);">Protest with interve..</div>
<div class="a" style="left:640px;top:380px;width:86px;height:15px;background:#4e79a7;"></div>
<div class="a t" id="f62" style="top:380.25px;font-size:15.3px;line-height:15.3px;color:#777777;right:1285.6px;transform-origin:100% 50%;transform:scaleX(1.1127);">Shelling/artillery/mi..</div>
<div class="a" style="left:640px;top:400px;width:69px;height:15px;background:#4e79a7;"></div>
<div class="a t" id="f63" style="top:400.25px;font-size:15.3px;line-height:15.3px;color:#777777;right:1285.6px;transform-origin:100% 50%;transform:scaleX(1.0725);">Looting/property de..</div>
<div class="a" style="left:640px;top:420px;width:57px;height:15px;background:#4e79a7;"></div>
<div class="a t" id="f64" style="top:420.25px;font-size:15.3px;line-height:15.3px;color:#777777;right:1285.6px;transform-origin:100% 50%;transform:scaleX(1.0240);">Mob violence</div>
<div class="a" style="left:640px;top:440px;width:53px;height:15px;background:#4e79a7;"></div>
<div class="a t" id="f65" style="top:440.25px;font-size:15.3px;line-height:15.3px;color:#777777;right:1285.6px;transform-origin:100% 50%;transform:scaleX(1.0876);">Arrests</div>
<div class="a" style="left:640px;top:460px;width:38px;height:15px;background:#4e79a7;"></div>
<div class="a t" id="f66" style="top:460.25px;font-size:15.3px;line-height:15.3px;color:#777777;right:1285.6px;transform-origin:100% 50%;transform:scaleX(1.0626);">Abduction/forced di..</div>
<div class="a" style="left:640px;top:480px;width:37px;height:15px;background:#4e79a7;"></div>
<div class="a t" id="f67" style="top:480.25px;font-size:15.3px;line-height:15.3px;color:#777777;right:1285.6px;transform-origin:100% 50%;transform:scaleX(1.0396);">Disrupted weapons ..</div>
<div class="a" style="left:640px;top:500px;width:32px;height:15px;background:#4e79a7;"></div>
<div class="a t" id="f68" style="top:500.25px;font-size:15.3px;line-height:15.3px;color:#777777;right:1285.6px;transform-origin:100% 50%;transform:scaleX(1.0741);">Other</div>
<div class="a" style="left:640px;top:520px;width:32px;height:15px;background:#4e79a7;"></div>
<div class="a t" id="f69" style="top:520.25px;font-size:15.3px;line-height:15.3px;color:#777777;right:1285.6px;transform-origin:100% 50%;transform:scaleX(1.0372);">Change to group/act..</div>
<div class="a" style="left:640px;top:540px;width:23px;height:15px;background:#4e79a7;"></div>
<div class="a t" id="f70" style="top:540.25px;font-size:15.3px;line-height:15.3px;color:#777777;right:1285.6px;transform-origin:100% 50%;transform:scaleX(1.0877);">Air/drone strike</div>
<div class="a" style="left:640px;top:560px;width:15px;height:15px;background:#4e79a7;"></div>
<div class="a t" id="f71" style="top:560.25px;font-size:15.3px;line-height:15.3px;color:#777777;right:1285.6px;transform-origin:100% 50%;transform:scaleX(1.0544);">Agreement</div>
<div class="a" style="left:640px;top:580px;width:14px;height:15px;background:#4e79a7;"></div>
<div class="a t" id="f72" style="top:580.25px;font-size:15.3px;line-height:15.3px;color:#777777;right:1285.6px;transform-origin:100% 50%;transform:scaleX(1.0079);">Grenade</div>
<div class="a" style="left:640px;top:600px;width:12px;height:15px;background:#4e79a7;"></div>
<div class="a t" id="f73" style="top:600.25px;font-size:15.3px;line-height:15.3px;color:#777777;right:1285.6px;transform-origin:100% 50%;transform:scaleX(1.0088);">Sexual violence</div>
<div class="a" style="left:640px;top:620px;width:9px;height:15px;background:#4e79a7;"></div>
<div class="a t" id="f74" style="top:620.25px;font-size:15.3px;line-height:15.3px;color:#777777;right:1285.6px;transform-origin:100% 50%;transform:scaleX(1.0108);">Excessive force agai..</div>
<div class="a" style="left:640px;top:640px;width:7px;height:15px;background:#4e79a7;"></div>
<div class="a t" id="f75" style="top:640.25px;font-size:15.3px;line-height:15.3px;color:#777777;right:1285.6px;transform-origin:100% 50%;transform:scaleX(1.0415);">Government regains..</div>
<div class="a" style="left:640px;top:660px;width:2px;height:15px;background:#4e79a7;"></div>
<div class="a t" id="f76" style="top:660.25px;font-size:15.3px;line-height:15.3px;color:#777777;right:1285.6px;transform-origin:100% 50%;transform:scaleX(1.0883);">Non-violent transfer..</div>
<div class="a" style="left:640px;top:680px;width:1px;height:15px;background:#4e79a7;"></div>
<div class="a t" id="f77" style="top:680.25px;font-size:15.3px;line-height:15.3px;color:#777777;right:1285.6px;transform-origin:100% 50%;transform:scaleX(1.0098);">Suicide bomb</div>
<div class="a" style="left:640px;top:700px;width:1px;height:15px;background:#4e79a7;"></div>
<div class="a t" id="f78" style="top:700.25px;font-size:15.3px;line-height:15.3px;color:#777777;right:1285.6px;transform-origin:100% 50%;transform:scaleX(1.0564);">Non-state actor over..</div>
<div class="a t" id="f79" style="top:720.25px;font-size:15.3px;line-height:15.3px;color:#777777;right:1285.6px;transform-origin:100% 50%;transform:scaleX(1.0382);">Headquarters or bas..</div>
<div class="a t" id="f80" style="top:746.93px;font-size:15.2px;line-height:15.2px;color:#707070;left:641.2px;transform-origin:0 50%;transform:scaleX(1.0884);">0</div>
<div class="a t" id="f81" style="top:746.93px;font-size:15.2px;line-height:15.2px;color:#707070;left:711.21px;transform:translateX(-50%) scaleX(1.0851);">500</div>
<div class="a t" id="f82" style="top:746.93px;font-size:15.2px;line-height:15.2px;color:#707070;left:783.52px;transform:translateX(-50%) scaleX(1.0563);">1000</div>
<div class="a t" id="f83" style="top:746.93px;font-size:15.2px;line-height:15.2px;color:#707070;left:855.8299999999999px;transform:translateX(-50%) scaleX(1.0563);">1500</div>
<div class="a t" id="f84" style="top:746.93px;font-size:15.2px;line-height:15.2px;color:#707070;left:928.14px;transform:translateX(-50%) scaleX(1.0563);">2000</div>
<div class="a t" id="f85" style="top:746.93px;font-size:15.2px;line-height:15.2px;color:#707070;left:1000.45px;transform:translateX(-50%) scaleX(1.0563);">2500</div>
<div class="a t" id="f86" style="top:746.93px;font-size:15.2px;line-height:15.2px;color:#707070;left:1072.76px;transform:translateX(-50%) scaleX(1.0563);">3000</div>
<div class="a t" id="f87" style="top:746.93px;font-size:15.2px;line-height:15.2px;color:#707070;left:1145.07px;transform:translateX(-50%) scaleX(1.0563);">3500</div>
<div class="a t" id="f88" style="top:746.93px;font-size:15.2px;line-height:15.2px;color:#707070;left:1217.3799999999999px;transform:translateX(-50%) scaleX(1.0563);">4000</div>
<div class="a t" id="f89" style="top:746.93px;font-size:15.2px;line-height:15.2px;color:#707070;left:1289.6899999999998px;transform:translateX(-50%) scaleX(1.0563);">4500</div>
<div class="a t" id="f90" style="top:746.93px;font-size:15.2px;line-height:15.2px;color:#707070;left:1362.0px;transform:translateX(-50%) scaleX(1.0563);">5000</div>
<div class="a t" id="f91" style="top:746.93px;font-size:15.2px;line-height:15.2px;color:#707070;left:1434.3100000000002px;transform:translateX(-50%) scaleX(1.0563);">5500</div>
<div class="a t" id="f92" style="top:746.93px;font-size:15.2px;line-height:15.2px;color:#707070;left:1506.6200000000001px;transform:translateX(-50%) scaleX(1.0563);">6000</div>
<div class="a t" id="f93" style="top:746.93px;font-size:15.2px;line-height:15.2px;color:#707070;left:1578.93px;transform:translateX(-50%) scaleX(1.0563);">6500</div>
<div class="a t" id="f94" style="top:746.93px;font-size:15.2px;line-height:15.2px;color:#707070;left:1651.24px;transform:translateX(-50%) scaleX(1.0563);">7000</div>
<div class="a t" id="f95" style="top:746.93px;font-size:15.2px;line-height:15.2px;color:#707070;left:1723.55px;transform:translateX(-50%) scaleX(1.0563);">7500</div>
<div class="a t" id="f96" style="top:746.93px;font-size:15.2px;line-height:15.2px;color:#707070;left:1795.86px;transform:translateX(-50%) scaleX(1.0563);">8000</div>
<div class="a t" id="f97" style="top:746.93px;font-size:15.2px;line-height:15.2px;color:#707070;left:1868.1699999999998px;transform:translateX(-50%) scaleX(1.0563);">8500</div>
<div class="a t" id="f98" style="top:775.64px;font-size:14.6px;line-height:14.6px;color:#3c3c3c;font-weight:bold;left:1217.2px;transform-origin:0 50%;transform:scaleX(1.0121);">NumberRecord</div>
<svg class="a" style="left:1330px;top:778px;" width="12" height="10" viewBox="0 0 12 10"><g fill="#444"><rect x="0" y="0.5" width="10" height="1.6"/><rect x="0" y="4" width="7" height="1.6"/><rect x="0" y="7.5" width="3.5" height="1.6"/></g></svg>
<div class="a" style="left:0px;top:967px;width:1920px;height:38px;background:#e6e6e6;"></div>
<div class="a" style="left:0px;top:967px;width:1920px;height:1px;background:#d4d4d4;"></div>
<div class="a" style="left:0px;top:1004px;width:1920px;height:1px;background:#d4d4d4;"></div>
<div class="a" style="left:0px;top:1005px;width:1920px;height:25px;background:#e8e8e8;"></div>
<svg class="a" style="left:10px;top:979px;" width="10" height="13" viewBox="0 0 10 13"><g fill="none" stroke="#666" stroke-width="1.1"><ellipse cx="5" cy="2.8" rx="3.6" ry="1.8"/><path d="M1.4 2.8v7.2c0 1 1.6 1.8 3.6 1.8s3.6-0.8 3.6-1.8V2.8"/></g></svg>
<div class="a t" id="f99" style="top:979.00px;font-size:15.0px;line-height:15.0px;color:#666;left:24.5px;transform-origin:0 50%;transform:scaleX(1.0205);">Data Source</div>
<div class="a" style="left:162px;top:968px;width:1px;height:36px;background:#cfcfcf;"></div>
<div class="a t" id="f100" style="top:979.00px;font-size:15.0px;line-height:15.0px;color:#666;left:169.5px;transform-origin:0 50%;transform:scaleX(1.0244);">Map</div>
<div class="a" style="left:209px;top:968px;width:1px;height:36px;background:#cfcfcf;"></div>
<div class="a t" id="f101" style="top:978.83px;font-size:15.2px;line-height:15.2px;color:#666;left:215.9px;transform-origin:0 50%;transform:scaleX(1.0241);">EventTimeChart</div>
<div class="a" style="left:342px;top:968px;width:123px;height:36px;background:#f7f7f7;"></div>
<div class="a" style="left:341px;top:968px;width:1px;height:36px;background:#cfcfcf;"></div>
<div class="a" style="left:465px;top:968px;width:1px;height:36px;background:#cfcfcf;"></div>
<div class="a t" id="f102" style="top:978.47px;font-size:14.8px;line-height:14.8px;color:#555;font-weight:bold;left:347.5px;transform-origin:0 50%;transform:scaleX(1.0235);">SubEventChart</div>
<div class="a" style="left:497px;top:968px;width:1px;height:36px;background:#cfcfcf;"></div>
<div class="a" style="left:529px;top:968px;width:1px;height:36px;background:#cfcfcf;"></div>
<div class="a" style="left:561px;top:968px;width:1px;height:36px;background:#cfcfcf;"></div>
<svg class="a" style="left:474px;top:977px;" width="18" height="18" viewBox="0 0 18 18"><g fill="none" stroke="#666" stroke-width="1.1"><path d="M11.8 7.6V2.2H1.4v10.4h6.2"/><path d="M4 10.5V9.2M6.4 10.5V7.2M8.6 10.5V8"/></g><path d="M12 9.2v7.3M8.1 12.9h7.9" stroke="#555" stroke-width="1.9"/></svg>
<svg class="a" style="left:506px;top:977px;" width="18" height="18" viewBox="0 0 18 18"><g fill="none" stroke="#666" stroke-width="1.1"><path d="M11.6 7.6V3.2a1 1 0 0 0-1-1H2.4a1 1 0 0 0-1 1v8.4a1 1 0 0 0 1 1h5.2M1.4 7.5h10.2M6.4 2.2v10.4"/></g><path d="M12 9.2v7.3M8.1 12.9h7.9" stroke="#555" stroke-width="1.9"/></svg>
<svg class="a" style="left:538px;top:977px;" width="18" height="18" viewBox="0 0 18 18"><g fill="none" stroke="#666" stroke-width="1.1"><path d="M1.2 2.2L6.4 4.3 11.6 2.2V7.6M1.2 2.2v9.4l5.2 2.1V4.3"/></g><path d="M12 9.2v7.3M8.1 12.9h7.9" stroke="#555" stroke-width="1.9"/></svg>
<div class="a t" id="f103" style="top:1010.64px;font-size:13.3px;line-height:13.3px;color:#333;left:2.6px;transform-origin:0 50%;transform:scaleX(1.0185);">24 marks</div>
<div class="a t" id="f104" style="top:1010.81px;font-size:13.1px;line-height:13.1px;color:#333;left:78.9px;transform-origin:0 50%;transform:scaleX(1.0100);">24 rows by 1 column</div>
<div class="a t" id="f105" style="top:1010.56px;font-size:13.4px;line-height:13.4px;color:#333;left:220.7px;transform-origin:0 50%;transform:scaleX(1.0091);">SUM(NumberRecord): 28,385</div>
<div class="a" style="left:1501px;top:1005px;width:1px;height:25px;background:#cfcfcf;"></div>
<div class="a" style="left:1658px;top:1005px;width:1px;height:25px;background:#cfcfcf;"></div>
<div class="a" style="left:1690px;top:1005px;width:1px;height:25px;background:#cfcfcf;"></div>
<div class="a" style="left:1722px;top:1005px;width:1px;height:25px;background:#cfcfcf;"></div>
<div class="a" style="left:1779px;top:1005px;width:1px;height:25px;background:#cfcfcf;"></div>
<div class="a" style="left:1850px;top:1005px;width:1px;height:25px;background:#cfcfcf;"></div>
<svg class="a" style="left:1507px;top:1009px;" width="12" height="14" viewBox="0 0 12 14"><g fill="none" stroke="#555" stroke-width="1.1"><circle cx="6" cy="4" r="3"/><path d="M1 13v-2.5c0-2 2-3 5-3s5 1 5 3V13z"/></g></svg>
<div class="a t" id="f106" style="top:1010.90px;font-size:13.0px;line-height:13.0px;color:#333;left:1527.2px;transform-origin:0 50%;transform:scaleX(1.0097);">Tan Wei Li Ama...</div>
<svg class="a" style="left:1640px;top:1014px;" width="9" height="6" viewBox="0 0 9 6"><path d="M0 0h8L4 5z" fill="#222"/></svg>
<svg class="a" style="left:1787px;top:1011.5px;" width="10" height="10" viewBox="0 0 10 10"><path d="M1.5 1v8" stroke="#bbb" stroke-width="1"/><path d="M8 1.5L3.5 5 8 8.5z" fill="#bbb"/></svg>
<svg class="a" style="left:1802px;top:1011.5px;" width="10" height="10" viewBox="0 0 10 10"><path d="M7 1.5L2.5 5 7 8.5z" fill="#bbb"/></svg>
<svg class="a" style="left:1818px;top:1011.5px;" width="10" height="10" viewBox="0 0 10 10"><path d="M3 1.5L7.5 5 3 8.5z" fill="#bbb"/></svg>
<svg class="a" style="left:1834px;top:1011.5px;" width="10" height="10" viewBox="0 0 10 10"><path d="M8.5 1v8" stroke="#bbb" stroke-width="1"/><path d="M2 1.5L6.5 5 2 8.5z" fill="#bbb"/></svg>
<svg class="a" style="left:1859px;top:1011px;" width="12" height="12" viewBox="0 0 12 12"><g fill="#aaa"><rect x="0" y="0" width="3" height="3"/><rect x="4.5" y="0" width="3" height="3"/><rect x="9" y="0" width="3" height="3"/><rect x="0" y="4.5" width="3" height="3"/><rect x="4.5" y="4.5" width="3" height="3"/><rect x="9" y="4.5" width="3" height="3"/><rect x="0" y="9" width="3" height="3"/><rect x="4.5" y="9" width="3" height="3"/><rect x="9" y="9" width="3" height="3"/></g></svg>
<svg class="a" style="left:1881px;top:1011px;" width="12" height="12" viewBox="0 0 12 12"><g fill="#aaa"><rect x="0" y="0" width="12" height="7"/><rect x="0" y="9" width="3" height="3"/><rect x="4.5" y="9" width="3" height="3"/><rect x="9" y="9" width="3" height="3"/></g></svg>
<div class="a" style="left:1903px;top:1011px;width:11px;height:11px;background:#616161;"></div>
<svg class="a" style="left:195px;top:325px;" width="90" height="50" viewBox="0 0 90 50"><g fill="none" stroke="#000" stroke-width="3.6" stroke-linecap="round" stroke-linejoin="round"><path d="M7.5 7.5C25 7.5 45 11 64 22C74 28 79 35 81 41"/><path d="M76.5 8.5C77 20 78 32 81 41C80 43 76 43 73 42.5C66 41.5 60 41 53.5 40.3"/></g></svg>
</body></html>
